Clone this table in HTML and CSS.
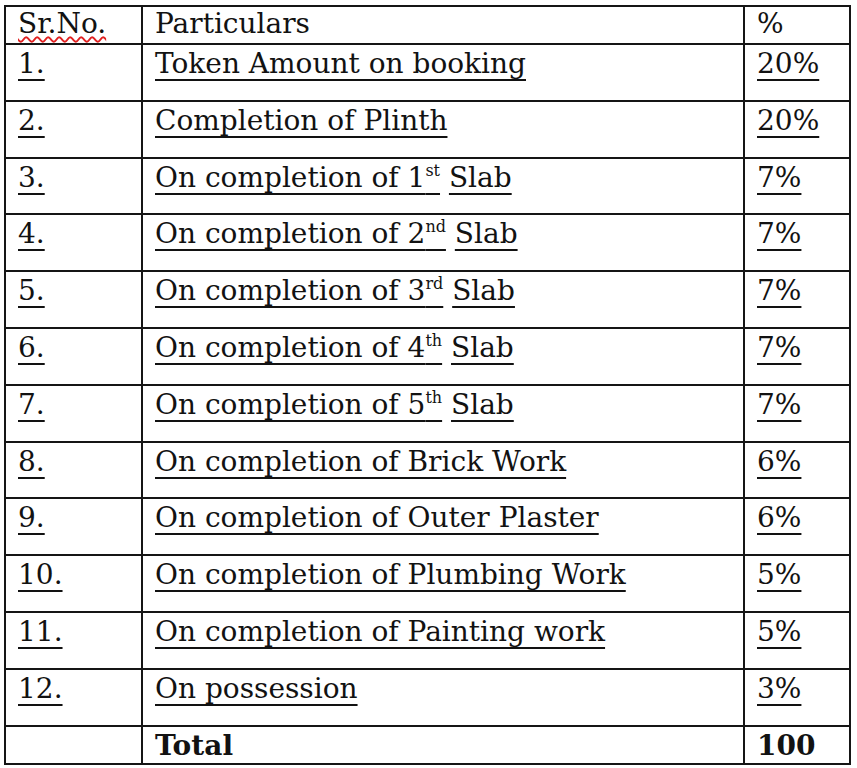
FILE: index.html
```html
<!DOCTYPE html>
<html>
<head>
<meta charset="utf-8">
<link rel="stylesheet" href="styles.css">
</head>
<body>
<table class="plan">
  <colgroup>
    <col class="c-no">
    <col class="c-part">
    <col class="c-pct">
  </colgroup>
  <tr class="head">
    <td><span class="spell">Sr.No.</span></td>
    <td>Particulars</td>
    <td>%</td>
  </tr>
  <tr class="row"><td><u>1.</u></td><td><u>Token Amount on booking</u></td><td><u>20%</u></td></tr>
  <tr class="row"><td><u>2.</u></td><td><u>Completion of Plinth</u></td><td><u>20%</u></td></tr>
  <tr class="row"><td><u>3.</u></td><td><u>On completion of 1<sup>st</sup></u> <u>Slab</u></td><td><u>7%</u></td></tr>
  <tr class="row"><td><u>4.</u></td><td><u>On completion of 2<sup>nd</sup></u> <u>Slab</u></td><td><u>7%</u></td></tr>
  <tr class="row"><td><u>5.</u></td><td><u>On completion of 3<sup>rd</sup></u> <u>Slab</u></td><td><u>7%</u></td></tr>
  <tr class="row"><td><u>6.</u></td><td><u>On completion of 4<sup>th</sup></u> <u>Slab</u></td><td><u>7%</u></td></tr>
  <tr class="row"><td><u>7.</u></td><td><u>On completion of 5<sup>th</sup></u> <u>Slab</u></td><td><u>7%</u></td></tr>
  <tr class="row"><td><u>8.</u></td><td><u>On completion of Brick Work</u></td><td><u>6%</u></td></tr>
  <tr class="row"><td><u>9.</u></td><td><u>On completion of Outer Plaster</u></td><td><u>6%</u></td></tr>
  <tr class="row"><td><u>10.</u></td><td><u>On completion of Plumbing Work</u></td><td><u>5%</u></td></tr>
  <tr class="row"><td><u>11.</u></td><td><u>On completion of Painting work</u></td><td><u>5%</u></td></tr>
  <tr class="row"><td><u>12.</u></td><td><u>On possession</u></td><td><u>3%</u></td></tr>
  <tr class="total"><td></td><td><b>Total</b></td><td><b>100</b></td></tr>
</table>
</body>
</html>
```
FILE: styles.css
```css
html, body {
  margin: 0;
  background: #fff;
}
body {
  padding: 5px 0 0 4px;
  font-family: "DejaVu Serif", "Liberation Serif", serif;
  color: #121212;
}
.plan {
  border-collapse: collapse;
  table-layout: fixed;
  width: 847px;
  font-size: 28px;
  line-height: 31px;
}
.c-no { width: 137px; }
.c-part { width: 602px; }
.c-pct { width: 106px; }
.plan td {
  border: 2px solid #151515;
  padding: 3px 10px 0 12px;
  vertical-align: top;
  white-space: nowrap;
}
.head { height: 38px; }
.head td { padding-top: 1px; }
.row { height: 56.8px; }
.total { height: 38px; }
.plan u {
  text-decoration: underline;
  text-decoration-thickness: 2px;
  text-underline-offset: 6px;
}
.plan sup {
  font-size: 16px;
  line-height: 0;
  vertical-align: 11px;
}
.spell {
  text-decoration: underline wavy #e02020;
  text-decoration-thickness: 1.5px;
  text-underline-offset: 3px;
}
.plan b { font-weight: bold; }
```
